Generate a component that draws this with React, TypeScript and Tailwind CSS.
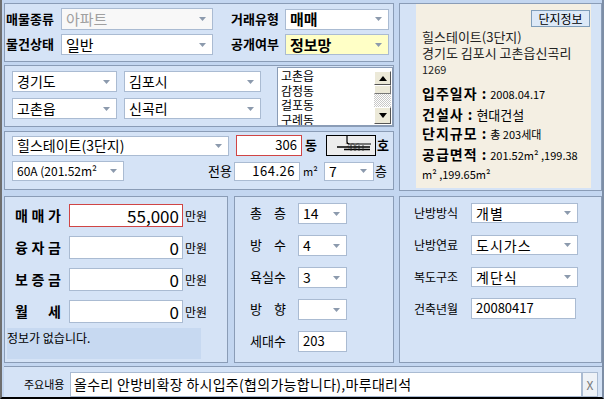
import type { ReactNode } from "react";

const font = "font-['Noto_Sans_CJK_KR','Noto_Sans',sans-serif]";

function Arrow() {
  return (
    <svg width="7" height="4" viewBox="0 0 7 4" className="shrink-0">
      <path d="M0 0h7L3.5 4z" fill="#8c9aad" />
    </svg>
  );
}

function Panel({ className, children }: { className: string; children?: ReactNode }) {
  return <div className={`border border-[#8a9cb6] bg-[#d5e3f6] ${className}`}>{children}</div>;
}

function Combo({
  value,
  className,
  textClass = "text-[14px]",
}: {
  value: string;
  className: string;
  textClass?: string;
}) {
  return (
    <div className={`flex items-center justify-between border border-[#aabbd2] pl-[4px] pr-[6px] ${className}`}>
      <span className={`leading-[1.15] whitespace-nowrap ${textClass}`}>{value}</span>
      <Arrow />
    </div>
  );
}

function Field({ value, className, textClass = "text-[13px]" }: { value: string; className: string; textClass?: string }) {
  return (
    <div className={`flex items-center bg-white border border-[#aabbd2] px-[4px] ${className}`}>
      <span className={`leading-[1.15] whitespace-nowrap w-full ${textClass}`}>{value}</span>
    </div>
  );
}

function Spread({ chars, className }: { chars: string[]; className: string }) {
  return (
    <div className={`flex justify-between ${className}`}>
      {chars.map((c, i) => (
        <span key={i}>{c}</span>
      ))}
    </div>
  );
}

function ScrollBtn({ up, className }: { up?: boolean; className: string }) {
  return (
    <div className={`flex items-center justify-center bg-[#ece9d8] border border-t-white border-l-white border-r-[#555] border-b-[#555] ${className}`}>
      <svg width="8" height="5" viewBox="0 0 8 5">
        <path d={up ? "M0 5h8L4 0z" : "M0 0h8L4 5z"} fill="#000" />
      </svg>
    </div>
  );
}

export default function App() {
  const money = [
    { label: ["매", "매", "가"], value: "55,000", red: true },
    { label: ["융", "자", "금"], value: "0" },
    { label: ["보", "증", "금"], value: "0" },
    { label: ["월", "세"], value: "0" },
  ];
  const rooms = [
    { label: ["총", "층"], value: "14" },
    { label: ["방", "수"], value: "4" },
    { label: ["욕", "실", "수"], value: "3" },
    { label: ["방", "향"], value: "" },
  ];
  const heat = [
    { label: "난방방식", value: "개별" },
    { label: "난방연료", value: "도시가스" },
    { label: "복도구조", value: "계단식" },
  ];

  return (
    <div
      className={`w-[604px] h-[399px] overflow-hidden bg-[#c3d6f0] border-l-2 border-l-[#6f6f6f] border-r-2 border-r-[#7d8ea6] border-b-2 border-b-black pt-[3px] pl-[2px] flex flex-col text-black ${font}`}
    >
      {/* top row */}
      <div className="flex gap-[5px] h-[188px]">
        <div className="w-[390px] flex flex-col">
          <Panel className="h-[59px] flex flex-col pt-[4px] pl-[1px] gap-[4px]">
            <div className="flex items-center h-[22px]">
              <span className="w-[55px] text-[13px] font-bold leading-[1.15]">매물종류</span>
              <Combo value="아파트" className="w-[152px] h-[22px] bg-[#f8f8f8]" textClass="text-[15px] text-[#a0a0a0]" />
              <span className="ml-[18px] w-[54px] text-[13px] font-bold leading-[1.15]">거래유형</span>
              <Combo value="매매" className="w-[104px] h-[21px] bg-white" textClass="text-[15px] font-bold" />
            </div>
            <div className="flex items-center h-[21px]">
              <span className="w-[55px] text-[13px] font-bold leading-[1.15]">물건상태</span>
              <Combo value="일반" className="w-[152px] h-[21px] bg-white" textClass="text-[15px]" />
              <span className="ml-[18px] w-[54px] text-[13px] font-bold leading-[1.15]">공개여부</span>
              <Combo value="정보망" className="w-[104px] h-[21px] bg-[#ffffc6]" textClass="text-[15px] font-bold" />
            </div>
          </Panel>

          <Panel className="h-[62px] mt-[3px] flex">
            <div className="flex flex-col gap-[6px] pt-[5px] pl-[7px]">
              <div className="flex gap-[7px]">
                <Combo value="경기도" className="w-[105px] h-[21px] bg-white" />
                <Combo value="김포시" className="w-[137px] h-[21px] bg-white" />
              </div>
              <div className="flex gap-[7px]">
                <Combo value="고촌읍" className="w-[105px] h-[21px] bg-white" />
                <Combo value="신곡리" className="w-[137px] h-[21px] bg-white" />
              </div>
            </div>
            <div className="ml-auto mt-[1px] w-[116px] h-[59px] bg-white border border-[#8a9cb6] flex overflow-hidden">
              <div className="flex-1 pl-[3px] pt-[1px] text-[12px] leading-[14.5px]">
                <div>고촌읍</div>
                <div>감정동</div>
                <div>걸포동</div>
                <div>구례동</div>
              </div>
              <div className="w-[17px] mr-[1px] mt-[3px] mb-[1px] flex flex-col">
                <ScrollBtn up className="h-[14px]" />
                <div className="h-[9px] bg-[#ece9d8] border border-t-white border-l-white border-r-[#777] border-b-[#777]" />
                <div className="flex-1 bg-[repeating-conic-gradient(#ffffff_0_25%,#c8c8c8_0_50%)] bg-[length:2px_2px]" />
                <ScrollBtn className="h-[17px]" />
              </div>
            </div>
          </Panel>

          <Panel className="h-[59px] mt-[4px] flex flex-col pt-[3px] pl-[7px] gap-[5px]">
            <div className="flex items-center h-[21px]">
              <Combo value="힐스테이트(3단지)" className="w-[217px] h-[20px] bg-white" />
              <Field value="306" className="ml-[7px] w-[66px] h-[21px] !border-[#d04545] text-right" />
              <span className="ml-[3px] w-[21px] text-[13px] font-bold leading-[1.15]">동</span>
              <div className="w-[50px] h-[21px] bg-[#ededed] border border-black">
                <svg width="48" height="19" viewBox="0 0 48 19">
                  <text x="18" y="14" fontSize="9" fill="#999">306</text>
                  <path d="M20 0v6q0 2 3 2h21" stroke="#000" strokeWidth="1.2" fill="none" />
                  <path d="M10 11h33M17 13.5h26" stroke="#000" strokeWidth="1.5" />
                  <path d="M24 9v6M28 9v6M32 9v6M36 9v6" stroke="#222" strokeWidth="0.8" />
                </svg>
              </div>
              <span className="ml-[1px] text-[13px] font-bold leading-[1.15]">호</span>
            </div>
            <div className="flex items-center h-[20px]">
              <Combo value="60A (201.52m²" className="w-[112px] h-[20px] bg-white" textClass="text-[12px]" />
              <span className="w-[110px] pr-[2px] text-right text-[13px] leading-[1.15]">전용</span>
              <Field value="164.26" className="w-[66px] h-[19px] text-right" textClass="text-[13px] tracking-[0.5px]" />
              <span className="ml-[3px] w-[21px] text-[11px] leading-[1.15]">m²</span>
              <Combo value="7" className="w-[50px] h-[19px] bg-white" />
              <span className="ml-[1px] text-[13px] leading-[1.15]">층</span>
            </div>
          </Panel>
        </div>

        <Panel className="w-[203px] h-[188px] flex pl-[16px] pr-[10px] pb-[2px]">
          <div className="flex-1 bg-[#f4efe3] pl-[6px] pr-[1px] pt-[6px] flex flex-col">
            <div className="flex justify-end">
              <div className="w-[59px] h-[17px] border border-[#7f9db9] bg-[#dde9f7] text-[12px] leading-[1.15] flex items-center justify-center">
                단지정보
              </div>
            </div>
            <div className="mt-[2px] text-[13px] leading-[16px] text-[#222]">
              <div>힐스테이트(3단지)</div>
              <div>경기도 김포시 고촌읍신곡리</div>
              <div className="text-[11px]">1269</div>
            </div>
            <div className="mt-[9px] flex flex-col gap-[4px] text-[12px] leading-[15.5px]">
              <div className="flex items-baseline">
                <span className="font-bold text-[14px] tracking-[1px]">입주일자 :</span>
                <span className="ml-[3px] text-[11px]">2008.04.17</span>
              </div>
              <div className="flex items-baseline">
                <span className="font-bold text-[14px] tracking-[1px]">건설사 :</span>
                <span className="ml-[3px] text-[13px]">현대건설</span>
              </div>
              <div className="flex items-baseline">
                <span className="font-bold text-[14px] tracking-[1px]">단지규모 :</span>
                <span className="ml-[3px] text-[11px]">총 203세대</span>
              </div>
              <div className="flex items-baseline">
                <span className="font-bold text-[14px] tracking-[1px]">공급면적 :</span>
                <span className="ml-[3px] text-[11px]">201.52m² ,199.38</span>
              </div>
              <div className="text-[11px]">m² ,199.65m²</div>
            </div>
          </div>
        </Panel>
      </div>

      {/* bottom panels */}
      <div className="flex mt-[5px] h-[167px]">
        <Panel className="w-[224px] flex flex-col pt-[7px] pl-[10px]">
          <div className="flex flex-col gap-[9px]">
            {money.map((m, i) => (
              <div key={i} className="flex items-center h-[23px]">
                <Spread chars={m.label} className="w-[46px] text-[14px] font-bold leading-[1.15]" />
                <div
                  className={`ml-[8px] w-[114px] h-[23px] bg-white border flex items-center justify-end pr-[3px] text-[17px] leading-[1.15] ${
                    m.red ? "border-[#d04545]" : "border-[#aabbd2]"
                  }`}
                >
                  {m.value}
                </div>
                <span className="ml-[2px] text-[12px] leading-[1.15]">만원</span>
              </div>
            ))}
          </div>
          <div className="mt-[5px] -ml-[8px] w-[194px] h-[31px] bg-[#c7d9f1] text-[12px] leading-[1.15] pt-[3px]">
            정보가 없습니다.
          </div>
        </Panel>

        <Panel className="ml-[6px] w-[160px] flex flex-col pt-[6px] pl-[15px] gap-[11px]">
          {rooms.map((r, i) => (
            <div key={i} className="flex items-center h-[21px]">
              <Spread chars={r.label} className="w-[36px] text-[13px] leading-[1.15]" />
              <Combo value={r.value} className="ml-[12px] w-[49px] h-[21px] bg-white" />
            </div>
          ))}
          <div className="flex items-center h-[21px]">
            <Spread chars={["세", "대", "수"]} className="w-[36px] text-[13px] leading-[1.15]" />
            <Field value="203" className="ml-[12px] w-[49px] h-[21px]" />
          </div>
        </Panel>

        <Panel className="ml-[5px] w-[203px] flex flex-col pt-[6px] pl-[14px] gap-[12px]">
          {heat.map((h, i) => (
            <div key={i} className="flex items-center h-[20px]">
              <span className="w-[57px] text-[12px] leading-[1.15]">{h.label}</span>
              <Combo value={h.value} className="w-[107px] h-[20px] bg-white" textClass="text-[14px] tracking-[1px]" />
            </div>
          ))}
          <div className="flex items-center h-[21px] -mt-[1px]">
            <span className="w-[57px] text-[12px] leading-[1.15]">건축년월</span>
            <Field value="20080417" className="w-[105px] h-[21px]" />
          </div>
        </Panel>
      </div>

      {/* memo bar */}
      <div className="mt-[3px] h-[31px] bg-[#d5e3f6] border-t border-[#8a9cb6] flex items-end pr-[4px]">
        <div className="h-[25px] flex items-center w-[66px] pl-[20px]">
          <span className="text-[11px] leading-[1.15] whitespace-nowrap">주요내용</span>
        </div>
        <div className="flex-1 h-[25px] bg-white border border-[#aabbd2] flex items-center pl-[3px] text-[14px] leading-[1.15] tracking-[0.3px] whitespace-nowrap overflow-hidden">
          올수리 안방비확장 하시입주(협의가능합니다),마루대리석
        </div>
        <div className="w-[16px] h-[25px] bg-[#eef2f7] border border-[#aabbd2] flex items-center justify-center text-[12px] text-[#777] leading-[1.15]">
          X
        </div>
      </div>
    </div>
  );
}
